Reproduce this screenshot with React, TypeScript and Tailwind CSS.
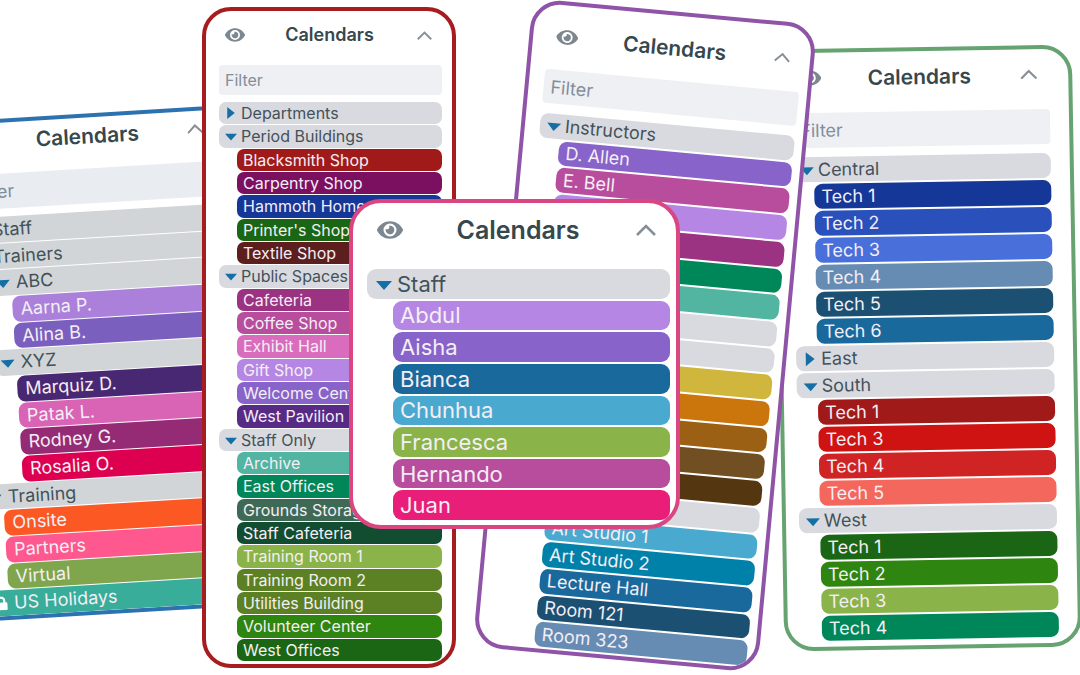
import { FaEye, FaLock } from "react-icons/fa";

type Row = {
  label?: string;
  kind: "open" | "closed" | "chip" | "blank";
  color?: string;
  level?: 1 | 2 | 3;
  locked?: boolean;
};

type Theme = {
  id: string;
  frame: string;
  header: string;
  title: string;
  eye: string;
  chevron: string;
  filter?: string;
  list: string;
  row: string;
  groupPad: string;
  chipPad: string;
  arrow: string;
  indent: [string, string, string];
  group: string;
};

const open = (label: string, level: 1 | 2 | 3 = 1): Row => ({ label, kind: "open", level });
const closed = (label: string, level: 1 | 2 | 3 = 1): Row => ({ label, kind: "closed", level });
const chip = (label: string, color: string, level: 1 | 2 | 3 = 2): Row => ({ label, kind: "chip", color, level });
const blank = (color: string): Row => ({ kind: "blank", color, level: 2 });

const trainingRows: Row[] = [
  closed("Staff"),
  closed("Trainers"),
  open("ABC", 2),
  chip("Aarna P.", "bg-[#ab80da]", 3),
  chip("Alina B.", "bg-[#7b5fbe]", 3),
  open("XYZ", 2),
  chip("Marquiz D.", "bg-[#492873]", 3),
  chip("Patak L.", "bg-[#d963b4]", 3),
  chip("Rodney G.", "bg-[#942b74]", 3),
  chip("Rosalia O.", "bg-[#dd0050]", 3),
  open("Training"),
  chip("Onsite", "bg-[#fc5824]"),
  chip("Partners", "bg-[#ff588e]"),
  chip("Virtual", "bg-[#7fa64c]"),
  { label: "US Holidays", kind: "chip", color: "bg-[#38ad99]", level: 1, locked: true },
];

const buildingRows: Row[] = [
  closed("Departments"),
  open("Period Buildings"),
  chip("Blacksmith Shop", "bg-[#a01a1a]"),
  chip("Carpentry Shop", "bg-[#7b0f60]"),
  chip("Hammoth Home", "bg-[#153898]"),
  chip("Printer's Shop", "bg-[#1a6614]"),
  chip("Textile Shop", "bg-[#5c1f1e]"),
  open("Public Spaces"),
  chip("Cafeteria", "bg-[#9c3282]"),
  chip("Coffee Shop", "bg-[#b84d9e]"),
  chip("Exhibit Hall", "bg-[#da6cbd]"),
  chip("Gift Shop", "bg-[#b586e3]"),
  chip("Welcome Center", "bg-[#8863c9]"),
  chip("West Pavilion", "bg-[#572a85]"),
  open("Staff Only"),
  chip("Archive", "bg-[#51b5a1]"),
  chip("East Offices", "bg-[#008759]"),
  chip("Grounds Storage", "bg-[#3e6a55]"),
  chip("Staff Cafeteria", "bg-[#124c31]"),
  chip("Training Room 1", "bg-[#8ab44a]"),
  chip("Training Room 2", "bg-[#5b8124]"),
  chip("Utilities Building", "bg-[#5b8124]"),
  chip("Volunteer Center", "bg-[#2e850f]"),
  chip("West Offices", "bg-[#1a6614]"),
];

const schoolRows: Row[] = [
  open("Instructors"),
  chip("D. Allen", "bg-[#8863c9]"),
  chip("E. Bell", "bg-[#b84d9e]"),
  blank("bg-[#b586e3]"),
  blank("bg-[#9c3282]"),
  blank("bg-[#008759]"),
  blank("bg-[#51b5a1]"),
  blank("bg-[#d9dadf]"),
  blank("bg-[#d9dadf]"),
  blank("bg-[#d0b63c]"),
  blank("bg-[#cb760c]"),
  blank("bg-[#9c6014]"),
  blank("bg-[#714f23]"),
  blank("bg-[#543611]"),
  blank("bg-[#d9dadf]"),
  chip("Art Studio 1", "bg-[#4aa9cf]", 3),
  chip("Art Studio 2", "bg-[#0081aa]", 3),
  chip("Lecture Hall", "bg-[#1a699d]", 3),
  chip("Room 121", "bg-[#1b5072]", 3),
  chip("Room 323", "bg-[#668cb4]", 3),
];

const techRows: Row[] = [
  open("Central"),
  chip("Tech 1", "bg-[#153898]"),
  chip("Tech 2", "bg-[#2a51bb]"),
  chip("Tech 3", "bg-[#486fda]"),
  chip("Tech 4", "bg-[#668cb4]"),
  chip("Tech 5", "bg-[#1b5072]"),
  chip("Tech 6", "bg-[#1a699d]"),
  closed("East"),
  open("South"),
  chip("Tech 1", "bg-[#a01a1a]"),
  chip("Tech 3", "bg-[#cf1212]"),
  chip("Tech 4", "bg-[#d02424]"),
  chip("Tech 5", "bg-[#f4675c]"),
  open("West"),
  chip("Tech 1", "bg-[#1a6614]"),
  chip("Tech 2", "bg-[#2e850f]"),
  chip("Tech 3", "bg-[#8ab44a]"),
  chip("Tech 4", "bg-[#008759]"),
];

const staffRows: Row[] = [
  open("Staff"),
  chip("Abdul", "bg-[#b586e3]"),
  chip("Aisha", "bg-[#8863c9]"),
  chip("Bianca", "bg-[#1a699d]"),
  chip("Chunhua", "bg-[#4aa9cf]"),
  chip("Francesca", "bg-[#8ab44a]"),
  chip("Hernando", "bg-[#b84d9e]"),
  chip("Juan", "bg-[#e91e78]"),
];

const blue: Theme = {
  id: "training",
  frame: "left-[-44px] top-[113px] w-[290px] h-[501px] rotate-[-3.45deg] border-[#2c72b0] rounded-[30px]",
  header: "h-9 pl-[21px] pr-[21px]",
  title: "text-[21px]",
  eye: "text-[22px]",
  chevron: "w-4",
  filter: "mt-[15px] h-[35px] ml-[14px] mr-[11px] pl-2 text-[18px] bg-[#e9edf1]",
  list: "mt-2 ml-[14px] mr-[11px] gap-px",
  row: "text-[18px] rounded-[8px]",
  groupPad: "pl-[6px] gap-[6px]",
  chipPad: "pl-2",
  arrow: "w-[14px]",
  indent: ["ml-0", "ml-[21px]", "ml-[42px]"],
  group: "bg-[#d1d5d8]",
};

const red: Theme = {
  id: "buildings",
  frame: "left-[202px] top-[7px] w-[254px] h-[661px] border-[#a61c1f] rounded-[29px] pb-[3px]",
  header: "h-12 pl-[17px] pr-[16px]",
  title: "text-[18px]",
  eye: "text-[20px]",
  chevron: "w-[15px]",
  filter: "mt-[6px] h-[30px] ml-[13px] mr-2.5 pl-[6px] text-[16px] bg-[#eff0f3]",
  list: "mt-[7px] ml-[13px] mr-2.5 gap-px",
  row: "text-[16px] rounded-[7px]",
  groupPad: "pl-[6px] gap-1",
  chipPad: "pl-[6px]",
  arrow: "w-3",
  indent: ["ml-0", "ml-[18px]", "ml-9"],
  group: "bg-[#d9dadf]",
};

const green: Theme = {
  id: "techs",
  frame: "left-[779px] top-[47px] w-[298px] h-[602px] rotate-[-1deg] border-[#66a371] rounded-[30px] pb-[6px]",
  header: "h-[50px] pl-5 pr-7",
  title: "text-[21px]",
  eye: "text-[22px]",
  chevron: "w-[17px]",
  filter: "mt-2.5 h-[35px] ml-[13px] mr-[19px] pl-2 text-[18px] bg-[#eff0f3]",
  list: "mt-[9px] ml-[13px] mr-[19px] gap-0.5",
  row: "text-[18px] rounded-[8px]",
  groupPad: "pl-[7px] gap-1",
  chipPad: "pl-[7px]",
  arrow: "w-[14px]",
  indent: ["ml-0", "ml-[21px]", "ml-[42px]"],
  group: "bg-[#d9dadf]",
};

const purple: Theme = {
  id: "school",
  frame: "left-[502px] top-[10px] w-[286px] h-[651px] rotate-[5.3deg] border-[#8f53a7] rounded-[30px] pb-0.5",
  header: "h-16 pl-[22px] pr-4",
  title: "text-[21px]",
  eye: "text-[22px]",
  chevron: "w-4",
  filter: "mt-px h-[34px] ml-[15px] mr-2 pl-[7px] text-[18px] bg-[#eff0f3]",
  list: "mt-2.5 ml-[15px] mr-2 gap-0.5",
  row: "text-[18px] rounded-[8px]",
  groupPad: "pl-[7px] gap-1",
  chipPad: "pl-[7px]",
  arrow: "w-[14px]",
  indent: ["ml-0", "ml-[21px]", "ml-[42px]"],
  group: "bg-[#d9dadf]",
};

const pink: Theme = {
  id: "staff",
  frame: "left-[349px] top-[199px] w-[331px] h-[330px] border-[#d94682] rounded-[32px] pb-[5px]",
  header: "h-[54px] pl-[25px] pr-[18px]",
  title: "text-[25px]",
  eye: "text-[26px]",
  chevron: "w-5",
  list: "mt-3 ml-[14px] mr-[6px] gap-0.5",
  row: "text-[22px] rounded-[9px]",
  groupPad: "pl-[9px] gap-[5px]",
  chipPad: "pl-[7px]",
  arrow: "w-4",
  indent: ["ml-0", "ml-[26px]", "ml-[52px]"],
  group: "bg-[#d9dadf]",
};

function Arrow({ expanded, className }: { expanded: boolean; className: string }) {
  return (
    <svg viewBox="0 0 16 16" className={`${className} shrink-0 fill-[#156fa6]`} aria-hidden="true">
      <path d={expanded ? "M0 5h16L8 14z" : "M3 0v16l10-8z"} />
    </svg>
  );
}

function RowItem({ row, theme }: { row: Row; theme: Theme }) {
  const indent = theme.indent[(row.level ?? 1) - 1];
  if (row.kind === "blank") {
    return <li className={`flex-1 min-h-0 ${indent} ${theme.row} ${row.color}`} />;
  }
  const isGroup = row.kind !== "chip";
  return (
    <li className={`flex min-h-0 flex-1 ${indent}`}>
      <button
        type="button"
        aria-expanded={isGroup ? row.kind === "open" : undefined}
        className={`flex w-full min-h-0 items-center overflow-hidden whitespace-nowrap text-left leading-none ${theme.row} ${
          isGroup
            ? `${theme.group} ${theme.groupPad} text-[#43525a]`
            : `${row.color} ${row.locked ? theme.groupPad : theme.chipPad} text-[#f4eef5]`
        }`}
      >
        {isGroup && <Arrow expanded={row.kind === "open"} className={theme.arrow} />}
        {row.locked && <FaLock className="w-[14px] shrink-0 text-[14px] text-white" />}
        <span>{row.label}</span>
      </button>
    </li>
  );
}

function CalendarPanel({ theme, rows }: { theme: Theme; rows: Row[] }) {
  return (
    <section className={`absolute flex flex-col overflow-hidden border-4 bg-white ${theme.frame}`}>
      <header className={`grid shrink-0 grid-cols-[24px_1fr_24px] items-center ${theme.header}`}>
        <button type="button" aria-label="Toggle visibility" className={`flex justify-center text-[#7c8790] ${theme.eye}`}>
          <FaEye className="shrink-0" />
        </button>
        <h2 className={`text-center font-semibold leading-none text-[#36474d] ${theme.title}`}>Calendars</h2>
        <button type="button" aria-label="Collapse" className="flex justify-center">
          <svg viewBox="0 0 20 12" className={theme.chevron} fill="none" stroke="#868f98" strokeWidth="2.5" aria-hidden="true">
            <path d="M1 11l9-9 9 9" />
          </svg>
        </button>
      </header>
      {theme.filter && (
        <input
          id={`filter-${theme.id}`}
          aria-label="Filter"
          placeholder="Filter"
          className={`min-w-0 shrink-0 rounded-[4px] outline-none placeholder:text-[#828e9b] ${theme.filter}`}
        />
      )}
      <ul className={`flex min-h-0 flex-1 flex-col ${theme.list}`}>
        {rows.map((row, i) => (
          <RowItem key={i} row={row} theme={theme} />
        ))}
      </ul>
    </section>
  );
}

export default function App() {
  return (
    <main className="relative min-h-screen w-full overflow-hidden bg-white font-['Inter',sans-serif]">
      <CalendarPanel theme={blue} rows={trainingRows} />
      <CalendarPanel theme={red} rows={buildingRows} />
      <CalendarPanel theme={green} rows={techRows} />
      <CalendarPanel theme={purple} rows={schoolRows} />
      <CalendarPanel theme={pink} rows={staffRows} />
    </main>
  );
}
